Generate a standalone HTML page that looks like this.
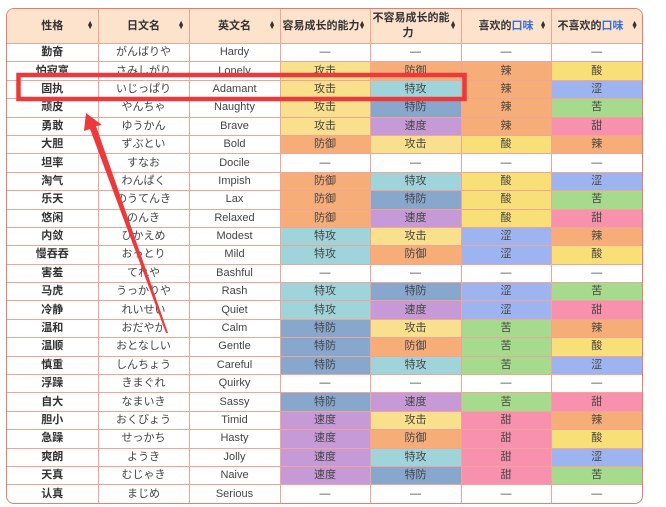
<!DOCTYPE html>
<html><head><meta charset="utf-8"><style>
body{margin:0;width:666px;height:507px;background:#fff;overflow:hidden;position:relative;font-family:"Liberation Sans","Noto Sans CJK SC",sans-serif;}
.wrap{position:absolute;left:6px;top:8px;width:637px;height:496px;border:1.5px solid #ec7b6b;border-radius:8px;overflow:hidden;box-sizing:border-box;}
table{border-collapse:collapse;table-layout:fixed;width:100%;font-size:11px;color:#444;}
td,th{border:1px solid #f2a597;text-align:center;padding:0;height:17.4px;line-height:17px;white-space:nowrap;overflow:hidden;}
th{background:#fde2cc;height:34px;font-size:11px;font-weight:bold;color:#333;position:relative;line-height:15px;}
th span.s{position:absolute;right:4px;top:50%;transform:translateY(-50%);font-size:7px;line-height:4px;}
th:first-child,td:first-child{border-left:none}
th:last-child,td:last-child{border-right:none}
tr:first-child th{border-top:none}
tr:last-child td{border-bottom:none}
td:first-child{font-weight:bold;color:#333}
.b{color:#3b6fd8}
.a{background:#f9e08d}.d{background:#f6ad78}.sa{background:#9fd4da}.sd{background:#87a7cd}.sp{background:#c59ad6}
.la{background:#f6ad78}.su{background:#f9df78}.dr{background:#9db4f1}.bi{background:#a6da8c}.sw{background:#f791ae}
</style></head><body>
<div class="wrap"><table>
<colgroup><col style="width:91px"><col style="width:91px"><col style="width:91px"><col style="width:90px"><col style="width:91px"><col style="width:90px"><col></colgroup>
<tr><th>性格<span class="s">▲<br>▼</span></th><th>日文名<span class="s">▲<br>▼</span></th><th>英文名<span class="s">▲<br>▼</span></th><th style="text-align:left;padding-left:2px">容易成长的能力<span class="s">▲<br>▼</span></th><th style="text-align:left;padding-left:2px">不容易成长的能<br><span style="padding-left:30px">力</span><span class="s">▲<br>▼</span></th><th>喜欢的<span class="b">口味</span><span class="s">▲<br>▼</span></th><th style="text-align:left;padding-left:6px">不喜欢的<span class="b">口味</span><span class="s">▲<br>▼</span></th></tr>
<tr><td>勤奋</td><td>がんばりや</td><td>Hardy</td><td>—</td><td>—</td><td>—</td><td>—</td></tr>
<tr><td>怕寂寞</td><td>さみしがり</td><td>Lonely</td><td class="a">攻击</td><td class="d">防御</td><td class="la">辣</td><td class="su">酸</td></tr>
<tr><td>固执</td><td>いじっぱり</td><td>Adamant</td><td class="a">攻击</td><td class="sa">特攻</td><td class="la">辣</td><td class="dr">涩</td></tr>
<tr><td>顽皮</td><td>やんちゃ</td><td>Naughty</td><td class="a">攻击</td><td class="sd">特防</td><td class="la">辣</td><td class="bi">苦</td></tr>
<tr><td>勇敢</td><td>ゆうかん</td><td>Brave</td><td class="a">攻击</td><td class="sp">速度</td><td class="la">辣</td><td class="sw">甜</td></tr>
<tr><td>大胆</td><td>ずぶとい</td><td>Bold</td><td class="d">防御</td><td class="a">攻击</td><td class="su">酸</td><td class="la">辣</td></tr>
<tr><td>坦率</td><td>すなお</td><td>Docile</td><td>—</td><td>—</td><td>—</td><td>—</td></tr>
<tr><td>淘气</td><td>わんぱく</td><td>Impish</td><td class="d">防御</td><td class="sa">特攻</td><td class="su">酸</td><td class="dr">涩</td></tr>
<tr><td>乐天</td><td>のうてんき</td><td>Lax</td><td class="d">防御</td><td class="sd">特防</td><td class="su">酸</td><td class="bi">苦</td></tr>
<tr><td>悠闲</td><td>のんき</td><td>Relaxed</td><td class="d">防御</td><td class="sp">速度</td><td class="su">酸</td><td class="sw">甜</td></tr>
<tr><td>内敛</td><td>ひかえめ</td><td>Modest</td><td class="sa">特攻</td><td class="a">攻击</td><td class="dr">涩</td><td class="la">辣</td></tr>
<tr><td>慢吞吞</td><td>おっとり</td><td>Mild</td><td class="sa">特攻</td><td class="d">防御</td><td class="dr">涩</td><td class="su">酸</td></tr>
<tr><td>害羞</td><td>てれや</td><td>Bashful</td><td>—</td><td>—</td><td>—</td><td>—</td></tr>
<tr><td>马虎</td><td>うっかりや</td><td>Rash</td><td class="sa">特攻</td><td class="sd">特防</td><td class="dr">涩</td><td class="bi">苦</td></tr>
<tr><td>冷静</td><td>れいせい</td><td>Quiet</td><td class="sa">特攻</td><td class="sp">速度</td><td class="dr">涩</td><td class="sw">甜</td></tr>
<tr><td>温和</td><td>おだやか</td><td>Calm</td><td class="sd">特防</td><td class="a">攻击</td><td class="bi">苦</td><td class="la">辣</td></tr>
<tr><td>温顺</td><td>おとなしい</td><td>Gentle</td><td class="sd">特防</td><td class="d">防御</td><td class="bi">苦</td><td class="su">酸</td></tr>
<tr><td>慎重</td><td>しんちょう</td><td>Careful</td><td class="sd">特防</td><td class="sa">特攻</td><td class="bi">苦</td><td class="dr">涩</td></tr>
<tr><td>浮躁</td><td>きまぐれ</td><td>Quirky</td><td>—</td><td>—</td><td>—</td><td>—</td></tr>
<tr><td>自大</td><td>なまいき</td><td>Sassy</td><td class="sd">特防</td><td class="sp">速度</td><td class="bi">苦</td><td class="sw">甜</td></tr>
<tr><td>胆小</td><td>おくびょう</td><td>Timid</td><td class="sp">速度</td><td class="a">攻击</td><td class="sw">甜</td><td class="la">辣</td></tr>
<tr><td>急躁</td><td>せっかち</td><td>Hasty</td><td class="sp">速度</td><td class="d">防御</td><td class="sw">甜</td><td class="su">酸</td></tr>
<tr><td>爽朗</td><td>ようき</td><td>Jolly</td><td class="sp">速度</td><td class="sa">特攻</td><td class="sw">甜</td><td class="dr">涩</td></tr>
<tr><td>天真</td><td>むじゃき</td><td>Naive</td><td class="sp">速度</td><td class="sd">特防</td><td class="sw">甜</td><td class="bi">苦</td></tr>
<tr><td>认真</td><td>まじめ</td><td>Serious</td><td>—</td><td>—</td><td>—</td><td>—</td></tr>
</table></div>
<svg width="666" height="507" style="position:absolute;left:0;top:0">
<rect x="18.5" y="75" width="446" height="24" fill="none" stroke="#ec3a3c" stroke-width="4.5"/>
<polygon points="86,113 84,131 90,129 166,333 168,333 96,126 102,125" fill="#ec3a3c"/>
</svg>
</body></html>
